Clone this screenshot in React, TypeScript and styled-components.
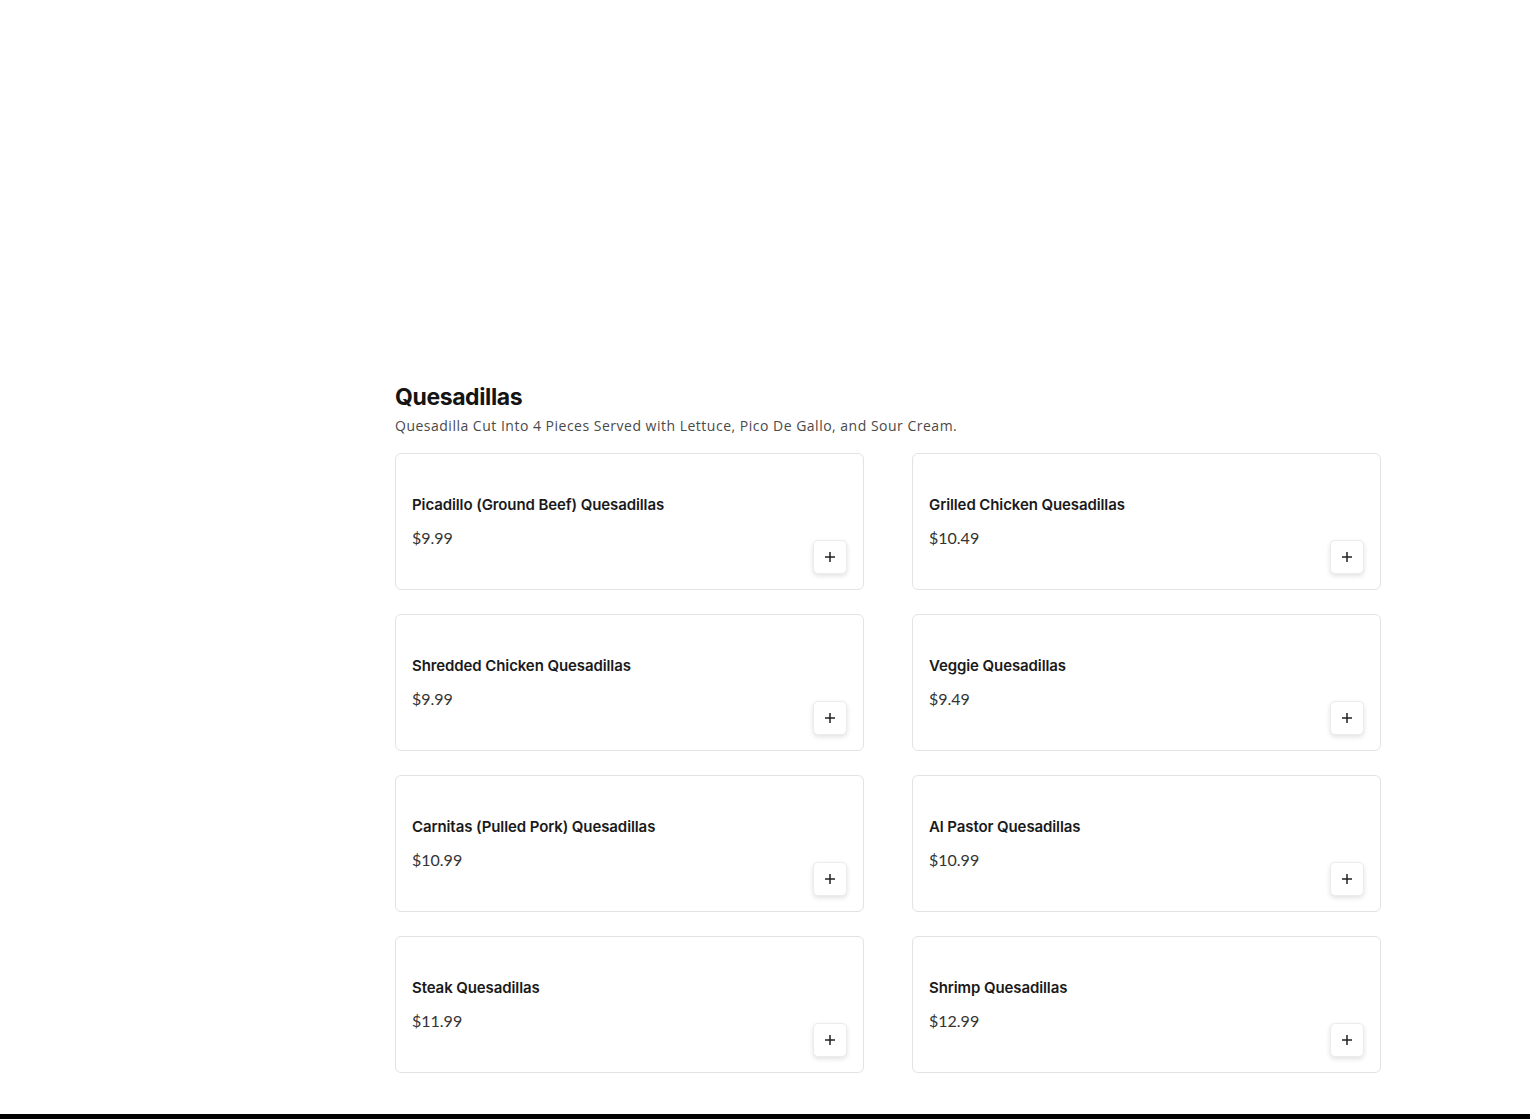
import React from "react";
import styled, { createGlobalStyle } from "styled-components";

const Global = createGlobalStyle`
  html, body { margin: 0; padding: 0; background: #fff; }
  body { font-family: "Lato", "Inter", sans-serif; color: #1a1a1a; }
  * { box-sizing: border-box; }
`;

const Page = styled.div`
  display: flex;
  flex-direction: column;
  min-height: 1119px;
`;

const Hero = styled.div`
  height: 380px;
`;

const Section = styled.section`
  width: 986px;
  margin-left: 395px;
  display: flex;
  flex-direction: column;
`;

const Title = styled.h2`
  margin: 0;
  font-family: "Inter", sans-serif;
  font-weight: 700;
  font-size: 23px;
  line-height: 34px;
  letter-spacing: -0.4px;
  color: #141414;
`;

const Desc = styled.p`
  margin: 2px 0 0;
  font-family: "Open Sans", sans-serif;
  font-size: 14px;
  line-height: 20px;
  letter-spacing: 0.5px;
  color: #4a4a4a;
`;

const Grid = styled.div`
  margin-top: 17px;
  display: grid;
  grid-template-columns: 1fr 1fr;
  column-gap: 48px;
  row-gap: 24px;
`;

const Card = styled.div`
  height: 137px;
  border: 1px solid #e3e3e3;
  border-radius: 6px;
  padding: 41px 16px 15px 16px;
  display: grid;
  grid-template-columns: 1fr auto;
  grid-template-rows: auto auto 1fr;
`;

const Name = styled.div`
  grid-column: 1 / 2;
  font-family: "Inter", sans-serif;
  font-weight: 600;
  font-size: 15px;
  line-height: 20px;
  letter-spacing: -0.1px;
  color: #1a1a1a;
`;

const Price = styled.div`
  grid-column: 1 / 2;
  margin-top: 12px;
  font-family: "Lato", sans-serif;
  font-size: 16px;
  line-height: 22px;
  color: #333;
`;

const AddButton = styled.button`
  grid-column: 2 / 3;
  grid-row: 1 / 4;
  align-self: end;
  width: 34px;
  height: 34px;
  border: 1px solid #ececec;
  border-radius: 5px;
  background: #fff;
  box-shadow: 0 2px 5px rgba(0, 0, 0, 0.12);
  display: flex;
  align-items: center;
  justify-content: center;
  padding: 0;
  cursor: pointer;
`;

const Footer = styled.div`
  margin-top: auto;
  height: 5px;
  background: #000;
`;

const items = [
  { name: "Picadillo (Ground Beef) Quesadillas", price: "$9.99" },
  { name: "Grilled Chicken Quesadillas", price: "$10.49" },
  { name: "Shredded Chicken Quesadillas", price: "$9.99" },
  { name: "Veggie Quesadillas", price: "$9.49" },
  { name: "Carnitas (Pulled Pork) Quesadillas", price: "$10.99" },
  { name: "Al Pastor Quesadillas", price: "$10.99" },
  { name: "Steak Quesadillas", price: "$11.99" },
  { name: "Shrimp Quesadillas", price: "$12.99" },
];

const Plus = () => (
  <svg width="12" height="12" viewBox="0 0 12 12">
    <path d="M6 1v10M1 6h10" stroke="#222" strokeWidth="1.5" />
  </svg>
);

export default function App() {
  return (
    <Page>
      <Global />
      <Hero />
      <Section>
        <Title>Quesadillas</Title>
        <Desc>Quesadilla Cut Into 4 Pieces Served with Lettuce, Pico De Gallo, and Sour Cream.</Desc>
        <Grid>
          {items.map((it) => (
            <Card key={it.name}>
              <Name>{it.name}</Name>
              <Price>{it.price}</Price>
              <AddButton aria-label="Add">
                <Plus />
              </AddButton>
            </Card>
          ))}
        </Grid>
      </Section>
      <Footer />
    </Page>
  );
}
